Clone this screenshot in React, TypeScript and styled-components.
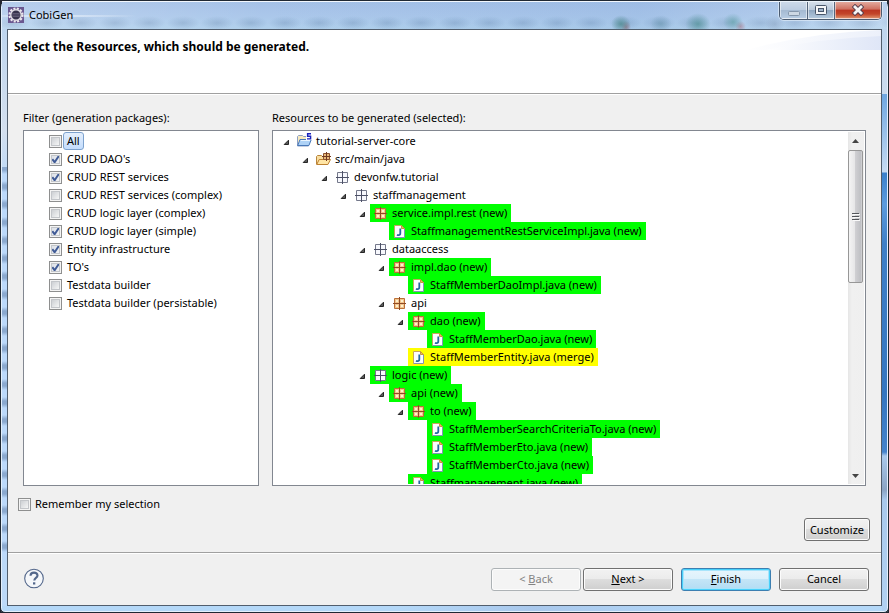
import React, { useState } from "react";
import styled, { createGlobalStyle, css } from "styled-components";

const GlobalStyle = createGlobalStyle`
  *, *::before, *::after { box-sizing: border-box; }
  html, body, #root { height: 100%; }
  body {
    margin: 0;
    background: #23252e;
    color: #000;
    font: 11px/18px "Noto Sans", "Open Sans", sans-serif;
  }
  button, input { font: inherit; color: inherit; }
`;

const WindowFrame = styled.div`
  display: flex;
  flex-direction: column;
  min-height: 100vh;
  padding: 0 6px 6px;
  border: 1px solid #1f2833;
  border-radius: 7px 7px 5px 5px;
  box-shadow: inset 0 0 0 1px #e4f0fc;
  background:
    linear-gradient(#6ea6e0 0, #c6dbf3 78px, #3a80cb 79px, #5d9bdd 110px, #3f7fc7 150px, #3576c0 300px, #4583cb 358px, #a9c9ec 362px, #8ba4c4 396px, #a9c9ec 406px, #b9d8f8 100%) right 93px / 6px 100% no-repeat,
    repeating-linear-gradient(#8ba9cf 0 3px, #bcd9fa 7px 14px, #8ba9cf 18px) left 166px / 6px 390px no-repeat,
    linear-gradient(90deg, #b4d8f8 0 45%, #a9c8ec 60%, #b4d8f8 80%) bottom / 100% 6px no-repeat,
    linear-gradient(#b9d3ef, #d3dfee 130px, #bcd9f8 180px);
`;

const TitleBar = styled.header`
  display: flex;
  justify-content: space-between;
  align-items: flex-start;
  height: 28px;
  flex: none;
  margin: 0 -5px;
  padding: 0 5px 0 6px;
  border-top: 1px solid #f2f7fd;
  background:
    radial-gradient(ellipse at center, #4f8a8fcc, #4f8a8f00 70%) 609px 13px / 20px 18px no-repeat,
    radial-gradient(ellipse at center, #9a5c6c99, #9a5c6c00 70%) 619px 19px / 10px 12px no-repeat,
    radial-gradient(ellipse at center, #5f8fa577, #5f8fa500 70%) 648px 13px / 22px 18px no-repeat,
    radial-gradient(ellipse at center, #4f8f95bb, #4f8f9500 70%) 683px 11px / 26px 22px no-repeat,
    radial-gradient(ellipse at center, #5f9fa5aa, #5f9fa500 70%) 721px 11px / 20px 18px no-repeat,
    radial-gradient(ellipse at center, #a86c7c88, #a86c7c00 70%) 733px 19px / 11px 11px no-repeat,
    radial-gradient(ellipse at center, #8299b977, #8299b900 70%) 763px 13px / 20px 18px no-repeat,
    radial-gradient(ellipse at 50px 14px, #eaf2fb 0, #eaf2fb00 90px),
    linear-gradient(90deg, #ffffff33, #ffffff00 30%, #6f9ad222 72%, #ffffff33),
    radial-gradient(ellipse at center, #6f8fb566, #6f8fb500 70%) 130px 14px / 34px 14px repeat-x,
    linear-gradient(#a4c1e7, #aac6ea 45%, #b0d0ec);
`;

const TitleText = styled.h1`
  display: flex;
  align-items: center;
  gap: 5px;
  margin: 0;
  padding-top: 4px;
  font-size: 11px;
  font-weight: 400;
  line-height: 18px;
`;

const CaptionButtons = styled.div`
  display: flex;
  height: 18px;
  border: 1px solid #4b5b70;
  border-top: 0;
  border-radius: 0 0 5px 5px;
  box-shadow: 0 0 0 1px #e6f0fa99;
  overflow: hidden;
`;

const CaptionButton = styled.button<{ $kind: "minimize" | "restore" | "close" }>`
  display: grid;
  place-items: center;
  width: ${(p) => (p.$kind === "close" ? 46 : p.$kind === "restore" ? 26 : 27)}px;
  padding: 0;
  border: 1px solid #ffffff88;
  border-top: 0;
  background: ${(p) =>
    p.$kind === "close"
      ? "linear-gradient(#e3a99d 0, #cf7060 45%, #bb3522 50%, #c3452a 75%, #dc8a65)"
      : p.$kind === "minimize"
        ? "linear-gradient(#ccd9e9, #bccde1 48%, #a4b9d1 50%, #b6cbe2)"
        : "linear-gradient(#d5dfeb, #b8c8da 48%, #8ea6c0 50%, #b2c8dd)"};

  & + & { box-shadow: -1px 0 #54657c; margin-left: 1px; }
`;

const Client = styled.main`
  display: flex;
  flex: 1;
  flex-direction: column;
  border: 1px solid #515e6d;
  background: #f0f0f0;
`;

const Banner = styled.section`
  display: flex;
  justify-content: space-between;
  align-items: flex-start;
  height: 64px;
  flex: none;
  border-bottom: 1px solid #a0a0a0;
  background: #fff;
`;

const BannerTitle = styled.h2`
  margin: 0;
  padding: 8px 0 0 6px;
  font-size: 12px;
  font-weight: 700;
  line-height: 18px;
`;

const Content = styled.section`
  display: flex;
  flex: 1;
  flex-direction: column;
  padding: 14px 15px 11px;
  border-top: 1px solid #fff;
`;

const Panels = styled.div`
  display: grid;
  flex: 1;
  grid-template-columns: 28% minmax(0, 1fr);
  gap: 13px;
`;

const Panel = styled.div`
  display: flex;
  flex-direction: column;
`;

const PanelLabel = styled.h3`
  margin: 0 0 3px;
  font-size: 11px;
  font-weight: 400;
  line-height: 18px;
`;

const ListBox = styled.div`
  display: flex;
  flex: 1 1 0;
  min-height: 200px;
  padding: 1px;
  border: 1px solid #828790;
  background: #fff;
  overflow: hidden;
`;

const FilterList = styled.ul`
  margin: 0;
  padding: 0 0 0 24px;
  list-style: none;
`;

const CheckText = styled.span<{ $selected?: boolean }>`
  padding: 0 3px;
  border: 1px solid transparent;
  border-radius: 3px;
  line-height: 16px;
  ${(p) =>
    p.$selected &&
    css`
      border-color: #7da2ce;
      background: linear-gradient(#e4effd, #c3dcfc);
    `}
`;

const CheckLabel = styled.label<{ $tight?: boolean }>`
  display: flex;
  align-items: center;
  gap: ${(p) => (p.$tight ? 0 : 1)}px;
  height: 18px;
`;

const tick =
  "url(\"data:image/svg+xml,%3Csvg xmlns='http://www.w3.org/2000/svg' viewBox='0 0 11 11'%3E%3Cpath d='M2.3 5.2 4.6 8.2 8.8 2' fill='none' stroke='%23405b96' stroke-width='2'/%3E%3C/svg%3E\")";

const CheckBox = styled.input`
  appearance: none;
  flex: none;
  width: 13px;
  height: 13px;
  margin: 1px 0 0;
  border: 1px solid #8e8f8f;
  background: linear-gradient(135deg, #cdd0d4, #f5f6f6) center / 7px 7px no-repeat, #fff;
  box-shadow: inset 0 0 0 1px #f4f4f4, inset 0 0 0 2px #c3c6ca;

  &:checked {
    background: ${tick} center / 11px 11px no-repeat, linear-gradient(135deg, #d7dce4, #f6f7f8);
  }
`;

const Tree = styled.ul`
  flex: 1;
  min-width: 0;
  height: 100%;
  margin: 0;
  padding: 0 0 0 7px;
  list-style: none;
  overflow: hidden;
`;

const TreeRow = styled.li<{ $level: number }>`
  display: flex;
  height: 18px;
  padding-left: ${(p) => p.$level * 19}px;
`;

const Toggle = styled.button`
  display: grid;
  place-items: center start;
  width: 13px;
  padding: 2px 0 0 2px;
  border: 0;
  background: none;
`;

const ToggleGap = styled.span`
  width: 13px;
`;

const NodeLabel = styled.span<{ $status?: "new" | "merge" }>`
  display: flex;
  align-items: center;
  gap: 3px;
  padding: 0 4px 0 3px;
  white-space: nowrap;
  background: ${(p) => (p.$status === "new" ? "#00ff00" : p.$status === "merge" ? "#ffff00" : "none")};

  svg { flex: none; }
`;

const ScrollBar = styled.div`
  display: flex;
  flex-direction: column;
  width: 16px;
  padding-right: 1px;
  background: linear-gradient(90deg, #e6e6e6, #f0f0f0 4px, #efefef);
`;

const ScrollArrow = styled.button`
  display: grid;
  place-items: center;
  height: 17px;
  padding: 0;
  border: 0;
  background: none;
`;

const ScrollTrack = styled.div`
  flex: 1;
  padding-top: 1px;
`;

const ScrollThumb = styled.div`
  display: grid;
  place-items: center;
  height: 42%;
  border: 1px solid #979797;
  border-radius: 2px;
  background: linear-gradient(90deg, #f4f4f4, #e6e6e7 45%, #cfcfd2 50%, #bfc0c4 90%, #d8d8da);
`;

const Remember = styled.div`
  display: flex;
  align-self: flex-start;
  margin: 9px 0 5px -5px;
`;

const CustomizeRow = styled.div`
  display: flex;
  justify-content: flex-end;
  margin-right: -4px;
`;

const PushButton = styled.button<{ $wide?: boolean; $primary?: boolean }>`
  height: 23px;
  min-width: ${(p) => (p.$wide ? 90 : 66)}px;
  padding: 0 4px;
  border: 1px solid #707070;
  border-radius: 3px;
  line-height: 20px;
  box-shadow: inset 0 0 0 1px #fcfcfc;
  background: linear-gradient(#f2f2f2, #ebebeb 48%, #dddddd 50%, #cfcfcf);

  ${(p) =>
    p.$primary &&
    css`
      border-color: #3c7fb1;
      box-shadow: inset 0 0 0 1px #48d0fa, inset 0 0 0 2px #a8e4fb;
      background: linear-gradient(#e8f5fc, #dcf0fb 48%, #c3e5f7 50%, #b2dcf3);
    `}

  &:disabled {
    border-color: #adb2b5;
    color: #838383;
    background: #f4f4f4;
  }
`;

const Footer = styled.footer`
  display: flex;
  justify-content: space-between;
  align-items: center;
  height: 53px;
  flex: none;
  padding: 0 12px 0 15px;
  border-top: 1px solid #a0a0a0;
  box-shadow: inset 0 1px #fff;
`;

const HelpButton = styled.button`
  display: grid;
  padding: 0;
  border: 0;
  background: none;
`;

const Actions = styled.div`
  display: flex;
  gap: 8px;
`;

const StepButtons = styled.div`
  display: flex;
  gap: 2px;
`;

const Icon = (props: React.SVGProps<SVGSVGElement>) => (
  <svg width="16" height="16" viewBox="0 0 16 16" aria-hidden="true" {...props} />
);

const AppIcon = () => (
  <Icon>
    <rect width="16" height="16" fill="#6a5890" />
    <circle cx="8" cy="8" r="6.4" fill="none" stroke="#ece8ee" strokeWidth="2.4" strokeDasharray="2.05 1.3" />
    <circle cx="8" cy="8" r="5.2" fill="#37334c" stroke="#dedbe2" strokeWidth="1.4" />
    <path d="M4.3 6.5h7.4M3.9 8h8.2M4.3 9.5h7.4" stroke="#69647e" strokeWidth=".8" />
  </Icon>
);

const PackageIcon = ({ filled }: { filled?: boolean }) => (
  <Icon>
    <path d="M2.5 3.5h10v10h-10z" fill={filled ? "#f3c58b" : "#f7f8fd"} stroke={filled ? "#bb7038" : "#74788a"} />
    {filled && <path d="M4 6h2M9 6h2M4 11h2M9 11h2" stroke="#fff0cf" strokeWidth="2" />}
    <path d="M7.5 2v13M1 8.5h13" stroke={filled ? "#8f4a26" : "#4c5066"} />
  </Icon>
);

const JavaIcon = () => (
  <Icon>
    <path d="M2.5 2.5h7l3 3v9h-10z" fill="#fcfdff" />
    <path d="M2.5 14.5v-12h7l3 3" fill="none" stroke="#c8a45c" />
    <path d="M12.5 5.5v9h-10" fill="none" stroke="#8293b4" />
    <path d="M9.5 2.5v3h3z" fill="#e8bb68" stroke="#c8963c" />
    <path d="M8.3 5.5v4.8c0 1.3-.7 1.8-1.7 1.8-.6 0-1.1-.1-1.6-.4" fill="none" stroke="#24689e" strokeWidth="1.8" />
  </Icon>
);

const ProjectIcon = () => (
  <Icon>
    <path d="M.5 13V3.5l1-1h4l1 1h5V13z" fill="#f7e9bd" stroke="#8c9fc4" />
    <path d="M.7 12.5 3 6.5h11.3l-2.4 6z" fill="#aed2f6" stroke="#4878b8" />
    <path d="M3.8 7.5h9.2" stroke="#eaf5ff" />
    <path d="M9 0h6v7H9z" fill="#fff" />
    <path d="M14 .8h-3.4v2.5h3v2.6h-3.6" fill="none" stroke="#1822bb" strokeWidth="1.4" />
  </Icon>
);

const SourceIcon = () => (
  <Icon>
    <path d="M.5 13V5.5l1-1h4l1 1h5V13z" fill="#f8dda0" stroke="#b9853b" />
    <path d="M.7 13.5 3.2 8.5h11.3l-2.6 5z" fill="#ffe5a5" stroke="#bd8131" />
    <path d="M7.5 2.5h6v6h-6z" fill="#e9b97a" stroke="#8a5230" />
    <path d="M10.5 1v9M6 5.5h9" stroke="#70391f" />
  </Icon>
);

const ExpandedArrow = () => (
  <svg width="7" height="7" viewBox="0 0 7 7" aria-hidden="true">
    <path d="M5.5 1.2v4.3H1.2z" fill="#595959" stroke="#262626" />
  </svg>
);

const HelpIcon = () => (
  <svg width="22" height="22" viewBox="0 0 22 22" aria-hidden="true">
    <circle cx="11" cy="10.5" r="9.3" fill="#f5f7fa" stroke="#53678b" strokeWidth="1.1" />
    <path d="M7.5 7.7c.1-2.1 1.5-3.1 3.5-3.1 2.1 0 3.5 1.1 3.5 2.9 0 2.5-3.2 2.4-3.2 5" fill="none" stroke="#53678b" strokeWidth="2.1" />
    <path d="M10 14.3h2.3v2.2H10z" fill="#53678b" />
  </svg>
);

const BannerArt = () => (
  <svg width="136" height="20" viewBox="0 0 136 20" aria-hidden="true">
    <defs>
      <linearGradient id="sweep">
        <stop offset="0" stopColor="#fff" />
        <stop offset="1" stopColor="#dfe6f7" />
      </linearGradient>
    </defs>
    <path d="M0 20Q70 2 136 0v20z" fill="url(#sweep)" opacity=".6" />
    <path d="M20 20Q80 8 136 6v14z" fill="url(#sweep)" />
  </svg>
);

const MinimizeGlyph = () => (
  <svg width="12" height="14" viewBox="0 0 12 14" aria-hidden="true">
    <rect x=".5" y="8.5" width="11" height="4" rx="1" fill="#cdd8e4" stroke="#8496ab" />
  </svg>
);

const RestoreGlyph = () => (
  <svg width="12" height="11" viewBox="0 0 12 11" aria-hidden="true">
    <rect x=".5" y=".5" width="11" height="9" rx="1" fill="#f5f6f8" stroke="#48566a" />
    <rect x="3.5" y="3.5" width="5" height="3" fill="#9fb2c8" stroke="#48566a" />
  </svg>
);

const CloseGlyph = () => (
  <svg width="14" height="12" viewBox="0 0 14 12" aria-hidden="true">
    <path d="m4 3 6 6m0-6-6 6" stroke="#563e4c" strokeWidth="4.6" strokeLinecap="square" />
    <path d="m4 3 6 6m0-6-6 6" stroke="#f7f4f4" strokeWidth="2.8" strokeLinecap="square" />
  </svg>
);

const ScrollGlyph = ({ down }: { down?: boolean }) => (
  <svg width="7" height="4" viewBox="0 0 7 4" aria-hidden="true">
    <path d={down ? "M0 0h7L3.5 4z" : "M0 4h7L3.5 0z"} fill="#444" />
  </svg>
);

const GripGlyph = () => (
  <svg width="8" height="9" viewBox="0 0 8 9" aria-hidden="true">
    <path d="M0 1.5h7M0 4.5h7M0 7.5h7" stroke="#53565b" />
    <path d="M1 2.5h7M1 5.5h7M1 8.5h7" stroke="#fafafa" />
  </svg>
);

const filters: [string, boolean][] = [
  ["All", false],
  ["CRUD DAO's", true],
  ["CRUD REST services", true],
  ["CRUD REST services (complex)", false],
  ["CRUD logic layer (complex)", false],
  ["CRUD logic layer (simple)", true],
  ["Entity infrastructure", true],
  ["TO's", true],
  ["Testdata builder", false],
  ["Testdata builder (persistable)", false],
];

type Kind = "project" | "source" | "empty" | "package" | "java";
type Node = { level: number; kind: Kind; name: string; status?: "new" | "merge" };

const nodes: Node[] = [
  { level: 0, kind: "project", name: "tutorial-server-core" },
  { level: 1, kind: "source", name: "src/main/java" },
  { level: 2, kind: "empty", name: "devonfw.tutorial" },
  { level: 3, kind: "empty", name: "staffmanagement" },
  { level: 4, kind: "package", name: "service.impl.rest", status: "new" },
  { level: 5, kind: "java", name: "StaffmanagementRestServiceImpl.java", status: "new" },
  { level: 4, kind: "empty", name: "dataaccess" },
  { level: 5, kind: "package", name: "impl.dao", status: "new" },
  { level: 6, kind: "java", name: "StaffMemberDaoImpl.java", status: "new" },
  { level: 5, kind: "package", name: "api" },
  { level: 6, kind: "package", name: "dao", status: "new" },
  { level: 7, kind: "java", name: "StaffMemberDao.java", status: "new" },
  { level: 6, kind: "java", name: "StaffMemberEntity.java", status: "merge" },
  { level: 4, kind: "empty", name: "logic", status: "new" },
  { level: 5, kind: "package", name: "api", status: "new" },
  { level: 6, kind: "package", name: "to", status: "new" },
  { level: 7, kind: "java", name: "StaffMemberSearchCriteriaTo.java", status: "new" },
  { level: 7, kind: "java", name: "StaffMemberEto.java", status: "new" },
  { level: 7, kind: "java", name: "StaffMemberCto.java", status: "new" },
  { level: 6, kind: "java", name: "Staffmanagement.java", status: "new" },
];

const NodeIcon = ({ kind }: { kind: Kind }) => {
  if (kind === "project") return <ProjectIcon />;
  if (kind === "source") return <SourceIcon />;
  if (kind === "java") return <JavaIcon />;
  return <PackageIcon filled={kind === "package"} />;
};

export default function App() {
  const [checks, setChecks] = useState(filters.map(([, on]) => on));
  const [collapsed, setCollapsed] = useState<number[]>([]);

  const flip = (i: number) => setChecks(checks.map((on, k) => (k === i ? !on : on)));
  const toggle = (i: number) =>
    setCollapsed(collapsed.includes(i) ? collapsed.filter((k) => k !== i) : [...collapsed, i]);
  const isHidden = (i: number) =>
    collapsed.some((c) => c < i && nodes.slice(c + 1, i + 1).every((n) => n.level > nodes[c].level));

  return (
    <>
      <GlobalStyle />
      <WindowFrame>
        <TitleBar>
          <TitleText><AppIcon />CobiGen</TitleText>
          <CaptionButtons>
            <CaptionButton $kind="minimize" aria-label="Minimize"><MinimizeGlyph /></CaptionButton>
            <CaptionButton $kind="restore" aria-label="Maximize"><RestoreGlyph /></CaptionButton>
            <CaptionButton $kind="close" aria-label="Close"><CloseGlyph /></CaptionButton>
          </CaptionButtons>
        </TitleBar>
        <Client>
          <Banner>
            <BannerTitle>Select the Resources, which should be generated.</BannerTitle>
            <BannerArt />
          </Banner>
          <Content>
            <Panels>
              <Panel>
                <PanelLabel>Filter (generation packages):</PanelLabel>
                <ListBox>
                  <FilterList>
                    {filters.map(([name], i) => (
                      <li key={name}>
                        <CheckLabel>
                          <CheckBox type="checkbox" checked={checks[i]} onChange={() => flip(i)} />
                          <CheckText $selected={i === 0}>{name}</CheckText>
                        </CheckLabel>
                      </li>
                    ))}
                  </FilterList>
                </ListBox>
              </Panel>
              <Panel>
                <PanelLabel>Resources to be generated (selected):</PanelLabel>
                <ListBox>
                  <Tree role="tree">
                    {nodes.map((node, i) =>
                      isHidden(i) ? null : (
                        <TreeRow key={i} $level={node.level} role="treeitem" aria-level={node.level + 1}>
                          {node.kind === "java" ? (
                            <ToggleGap />
                          ) : (
                            <Toggle aria-label={`Toggle ${node.name}`} onClick={() => toggle(i)}>
                              <ExpandedArrow />
                            </Toggle>
                          )}
                          <NodeLabel $status={node.status}>
                            <NodeIcon kind={node.kind} />
                            {node.status ? `${node.name} (${node.status})` : node.name}
                          </NodeLabel>
                        </TreeRow>
                      ),
                    )}
                  </Tree>
                  <ScrollBar>
                    <ScrollArrow aria-label="Scroll up"><ScrollGlyph /></ScrollArrow>
                    <ScrollTrack>
                      <ScrollThumb><GripGlyph /></ScrollThumb>
                    </ScrollTrack>
                    <ScrollArrow aria-label="Scroll down"><ScrollGlyph down /></ScrollArrow>
                  </ScrollBar>
                </ListBox>
              </Panel>
            </Panels>
            <Remember>
              <CheckLabel $tight>
                <CheckBox type="checkbox" />
                <CheckText>Remember my selection</CheckText>
              </CheckLabel>
            </Remember>
            <CustomizeRow>
              <PushButton>Customize</PushButton>
            </CustomizeRow>
          </Content>
          <Footer>
            <HelpButton aria-label="Help"><HelpIcon /></HelpButton>
            <Actions>
              <StepButtons>
                <PushButton $wide disabled>&lt; <u>B</u>ack</PushButton>
                <PushButton $wide><u>N</u>ext &gt;</PushButton>
              </StepButtons>
              <PushButton $wide $primary><u>F</u>inish</PushButton>
              <PushButton $wide>Cancel</PushButton>
            </Actions>
          </Footer>
        </Client>
      </WindowFrame>
    </>
  );
}
